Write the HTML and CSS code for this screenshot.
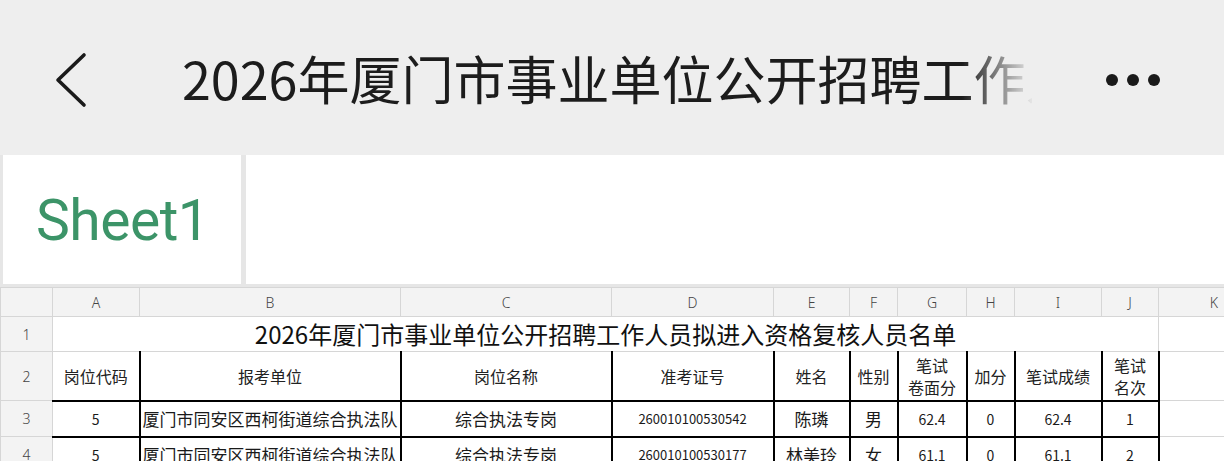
FILE: index.html
```html
<!DOCTYPE html>
<html lang="zh-CN">
<head>
<meta charset="utf-8">
<title>Sheet1</title>
<link rel="stylesheet" href="styles.css">
</head>
<body>
<div class="page">
  <header class="topbar">
    <div class="back">
      <svg width="32" height="56" viewBox="0 0 32 56"><polyline points="29,3 3,28 29,53" fill="none" stroke="#1a1a1a" stroke-width="3.6" stroke-linecap="round" stroke-linejoin="round"/></svg>
    </div>
    <div class="title">2026年厦门市事业单位公开招聘工作人员拟进入资格复核人员名单</div>
    <div class="more"><span class="dot"></span><span class="dot"></span><span class="dot"></span></div>
  </header>
  <nav class="tabs">
    <div class="tab">Sheet1</div>
    <div class="tab-rest"></div>
  </nav>
  <table class="sheet">
    <colgroup>
      <col class="c-rh"><col class="c-a"><col class="c-b"><col class="c-c"><col class="c-d"><col class="c-e"><col class="c-f"><col class="c-g"><col class="c-h"><col class="c-i"><col class="c-j"><col class="c-k">
    </colgroup>
    <tr class="r-head">
      <th class="corner"></th><th>A</th><th>B</th><th>C</th><th>D</th><th>E</th><th>F</th><th>G</th><th>H</th><th>I</th><th>J</th><th class="k-head">K</th>
    </tr>
    <tr class="r-1">
      <th class="rn">1</th>
      <td colspan="10" class="big-title">2026年厦门市事业单位公开招聘工作人员拟进入资格复核人员名单</td>
      <td></td>
    </tr>
    <tr class="r-2">
      <th class="rn">2</th>
      <td class="bk hd">岗位代码</td>
      <td class="bk hd">报考单位</td>
      <td class="bk hd">岗位名称</td>
      <td class="bk hd">准考证号</td>
      <td class="bk hd">姓名</td>
      <td class="bk hd">性别</td>
      <td class="bk hd two">笔试<br>卷面分</td>
      <td class="bk hd">加分</td>
      <td class="bk hd">笔试成绩</td>
      <td class="bk hd two">笔试<br>名次</td>
      <td></td>
    </tr>
    <tr class="r-d">
      <th class="rn">3</th>
      <td class="bk num">5</td>
      <td class="bk cn">厦门市同安区西柯街道综合执法队</td>
      <td class="bk cn">综合执法专岗</td>
      <td class="bk id">260010100530542</td>
      <td class="bk cn">陈璘</td>
      <td class="bk cn">男</td>
      <td class="bk num">62.4</td>
      <td class="bk num">0</td>
      <td class="bk num">62.4</td>
      <td class="bk num">1</td>
      <td></td>
    </tr>
    <tr class="r-d">
      <th class="rn">4</th>
      <td class="bk num">5</td>
      <td class="bk cn">厦门市同安区西柯街道综合执法队</td>
      <td class="bk cn">综合执法专岗</td>
      <td class="bk id">260010100530177</td>
      <td class="bk cn">林美玲</td>
      <td class="bk cn">女</td>
      <td class="bk num">61.1</td>
      <td class="bk num">0</td>
      <td class="bk num">61.1</td>
      <td class="bk num">2</td>
      <td></td>
    </tr>
  </table>
</div>
</body>
</html>
```

FILE: styles.css
```css
* { box-sizing: border-box; }
html, body {
  margin: 0;
  padding: 0;
  background: #ffffff;
  overflow: hidden;
}
body {
  width: 1224px;
  height: 461px;
  font-family: "Noto Sans CJK SC", "Noto Sans", sans-serif;
  color: #1a1a1a;
}
.page { width: 1224px; }

.topbar {
  height: 155px;
  background: #eeeeee;
  display: flex;
  align-items: center;
  padding-top: 0;
}
.back {
  width: 182px;
  padding-left: 55px;
  display: flex;
  align-items: center;
  margin-top: 4px;
}
.back svg { display: block; }
.title {
  width: 850px;
  font-size: 52px;
  line-height: 64px;
  white-space: nowrap;
  overflow: hidden;
  color: #1c1c1c;
  -webkit-mask-image: linear-gradient(to right, #000 0, #000 780px, rgba(0,0,0,0.04) 850px);
  mask-image: linear-gradient(to right, #000 0, #000 780px, rgba(0,0,0,0.04) 850px);
}
.more {
  display: flex;
  gap: 9px;
  margin-left: 74px;
  margin-top: 4px;
  align-items: center;
}
.dot {
  width: 12px;
  height: 12px;
  border-radius: 50%;
  background: #1a1a1a;
}

.tabs {
  height: 132px;
  display: flex;
  border-bottom: 3px solid #e6e6e6;
}
.tab {
  width: 246px;
  border-left: 3px solid #e6e6e6;
  border-right: 5px solid #e6e6e6;
  background: #ffffff;
  display: flex;
  align-items: center;
  padding-left: 33px;
  padding-top: 2px;
  font-family: Roboto, "Noto Sans", sans-serif;
  font-size: 57px;
  letter-spacing: -0.5px;
  color: #3c9468;
}
.tab-rest { flex: 1; background: #ffffff; }

.sheet {
  border-collapse: collapse;
  table-layout: fixed;
  width: 1224px;
  font-family: "Noto Sans CJK SC", "Noto Sans", sans-serif;
}
.c-rh { width: 52px; }
.c-a { width: 87px; }
.c-b { width: 261px; }
.c-c { width: 211px; }
.c-d { width: 162px; }
.c-e { width: 76px; }
.c-f { width: 48px; }
.c-g { width: 69px; }
.c-h { width: 48px; }
.c-i { width: 87px; }
.c-j { width: 57px; }
.c-k { width: 66px; }

.sheet th, .sheet td {
  border: 1px solid #d6d6d6;
  padding: 0;
  text-align: center;
  vertical-align: middle;
  overflow: hidden;
  white-space: nowrap;
}
.sheet th {
  background: #f3f3f3;
  font-weight: 300;
  font-size: 14px;
  color: #444444;
  font-family: "Noto Sans", "DejaVu Sans", sans-serif;
}
.k-head { text-align: right !important; padding-right: 6px !important; }
.r-head { height: 29px; }
.r-1 { height: 35px; }
.r-2 { height: 49px; }
.r-d { height: 36px; }

.big-title {
  font-size: 24px;
  color: #111111;
  line-height: 30px;
}
.bk {
  border-right: 2px solid #000000 !important;
  border-bottom: 2px solid #000000 !important;
}
.hd {
  font-size: 16px;
  color: #222222;
  line-height: 22px;
}
.cn {
  font-size: 17px;
  color: #1a1a1a;
}
.id {
  font-size: 13px;
  color: #1a1a1a;
}
.num {
  font-size: 14px;
  color: #1a1a1a;
}
```
